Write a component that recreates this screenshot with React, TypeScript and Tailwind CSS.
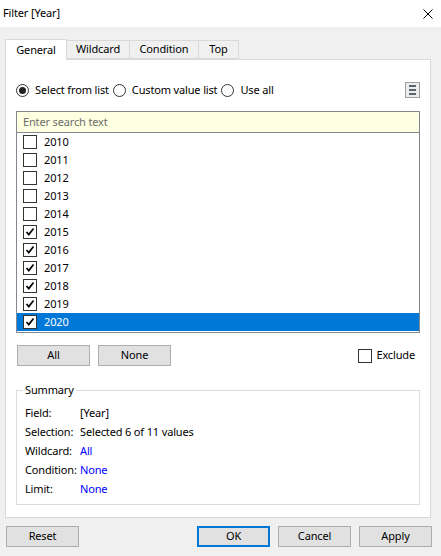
const years = [2010, 2011, 2012, 2013, 2014, 2015, 2016, 2017, 2018, 2019, 2020];
const checked = new Set([2015, 2016, 2017, 2018, 2019, 2020]);

function Check({ on }: { on: boolean }) {
  return (
    <span className="flex h-[14px] w-[14px] shrink-0 items-center justify-center border border-[#333] bg-white">
      {on && (
        <svg width="10" height="10" viewBox="0 0 10 10">
          <path d="M1.5 5 L3.8 7.6 L8.5 1.6" fill="none" stroke="#000" strokeWidth="1.7" />
        </svg>
      )}
    </span>
  );
}

function Radio({ on, label }: { on: boolean; label: string }) {
  return (
    <label className="flex items-center gap-[6px]">
      <span className="flex h-[13px] w-[13px] items-center justify-center rounded-full border border-[#333] bg-white">
        {on && <span className="h-[7px] w-[7px] rounded-full bg-[#222]" />}
      </span>
      <span>{label}</span>
    </label>
  );
}

function Btn({ label, primary }: { label: string; primary?: boolean }) {
  return (
    <button
      className={
        "h-[21px] w-[73px] bg-[#e1e1e1] text-black " +
        (primary ? "border-2 border-[#0078d7]" : "border border-[#adadad]")
      }
    >
      {label}
    </button>
  );
}

const summary: [string, string, boolean][] = [
  ["Field:", "[Year]", false],
  ["Selection:", "Selected 6 of 11 values", false],
  ["Wildcard:", "All", true],
  ["Condition:", "None", true],
  ["Limit:", "None", true],
];

export default function App() {
  return (
    <div
      className="flex h-[556px] w-[441px] flex-col bg-[#f0f0f0] text-[11px] tracking-[-0.15px] text-black"
      style={{ fontFamily: '"Noto Sans", sans-serif' }}
    >
      {/* title bar */}
      <div className="flex h-[27px] items-center justify-between bg-white pl-[3px] pr-[8px]">
        <span>Filter [Year]</span>
        <svg width="10" height="10" viewBox="0 0 10 10">
          <path d="M0.5 0.5 L9.5 9.5 M9.5 0.5 L0.5 9.5" stroke="#000" strokeWidth="1" />
        </svg>
      </div>

      {/* tabs */}
      <div className="mt-[11px] flex h-[21px] items-end pl-[5px]">
        <div className="relative z-10 -mb-px flex h-[21px] w-[62px] items-center justify-center border border-b-0 border-[#d9d9d9] bg-white">
          General
        </div>
        <div className="flex h-[19px] w-[63px] items-center justify-center border border-l-0 border-[#d9d9d9]">
          Wildcard
        </div>
        <div className="flex h-[19px] w-[69px] items-center justify-center border border-l-0 border-[#d9d9d9]">
          Condition
        </div>
        <div className="flex h-[19px] w-[40px] items-center justify-center border border-l-0 border-[#d9d9d9]">
          Top
        </div>
      </div>

      {/* panel */}
      <div className="ml-[5px] flex h-[459px] w-[426px] flex-col border border-[#d9d9d9] bg-white px-[10px] pt-[22px]">
        <div className="flex h-[16px] items-center justify-between">
          <div className="flex items-center gap-[4px]">
            <Radio on label="Select from list" />
            <Radio on={false} label="Custom value list" />
            <Radio on={false} label="Use all" />
          </div>
          <div className="flex h-[16px] w-[15px] flex-col items-center justify-center gap-[2px] border border-[#a0a0a0] bg-[#ececec]">
            <span className="h-[2px] w-[7px] bg-[#5a6473]" />
            <span className="h-[2px] w-[7px] bg-[#5a6473]" />
            <span className="h-[2px] w-[7px] bg-[#5a6473]" />
          </div>
        </div>

        {/* list box */}
        <div className="mt-[13px] border border-[#828790]">
          <div className="flex h-[21px] items-center border-b border-[#828790] bg-[#ffffe1] pl-[6px] text-[#6d6d6d]">
            Enter search text
          </div>
          <div className="flex flex-col pb-px">
            {years.map((y) => (
              <div
                key={y}
                className={
                  "flex h-[18px] items-center gap-[7px] pl-[6px] " +
                  (y === 2020 ? "bg-[#0078d7] text-white" : "")
                }
              >
                <Check on={checked.has(y)} />
                <span>{y}</span>
              </div>
            ))}
          </div>
        </div>

        {/* all / none / exclude */}
        <div className="mt-[12px] flex items-center justify-between pl-px pr-[5px]">
          <div className="flex gap-[8px]">
            <Btn label="All" />
            <Btn label="None" />
          </div>
          <label className="flex items-center gap-[4px]">
            <Check on={false} />
            <span>Exclude</span>
          </label>
        </div>

        {/* summary */}
        <div className="relative mt-[24px] flex h-[115px] flex-col border border-[#dcdcdc] pl-[8px] pt-[13px]">
          <span className="absolute -top-[9px] left-[6px] bg-white px-[2px]">Summary</span>
          {summary.map(([k, v, link]) => (
            <div key={k} className="flex h-[19px] items-center whitespace-nowrap">
              <span className="w-[55px] shrink-0">{k}</span>
              <span className={link ? "text-[#0000ff]" : ""}>{v}</span>
            </div>
          ))}
        </div>
      </div>

      {/* footer buttons */}
      <div className="mt-[8px] flex items-center justify-between pl-[6px] pr-[9px]">
        <Btn label="Reset" />
        <div className="flex gap-[8px]">
          <Btn label="OK" primary />
          <Btn label="Cancel" />
          <Btn label="Apply" />
        </div>
      </div>
    </div>
  );
}
